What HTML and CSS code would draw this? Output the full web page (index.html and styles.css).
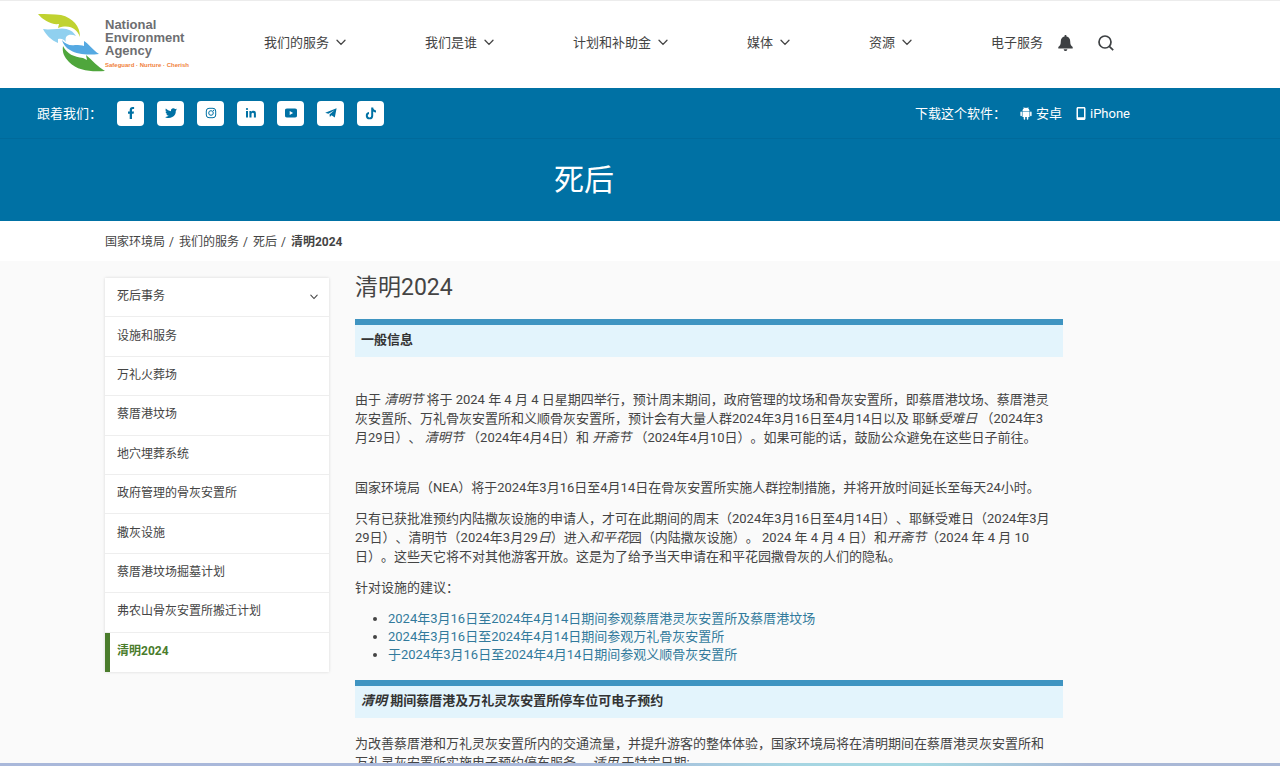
FILE: index.html
```html
<!DOCTYPE html>
<html lang="zh-CN">
<head>
<meta charset="utf-8">
<meta name="viewport" content="width=device-width, initial-scale=1">
<title>清明2024</title>
<link rel="stylesheet" href="styles.css">
</head>
<body>
<svg class="defs" width="0" height="0" aria-hidden="true">
  <symbol id="chevron" viewBox="0 0 10 7"><path d="M1 1.2 5 5.4 9 1.2" fill="none" stroke="currentColor" stroke-width="1.3" stroke-linecap="round"/></symbol>
</svg>

<header class="header">
  <a class="logo" href="#" aria-label="National Environment Agency">
    <svg class="logo-mark" viewBox="0 0 68 58" aria-hidden="true">
      <path d="M0 0C8 0 16 0 23 1c12 3 19 11 19 22-3-8-10-13-22-9l1-4C13 11 5 6 0 0Z" fill="#c0d230"/>
      <path d="M5 15c5 1 9 0 14 0 8-2 16 1 19 7-6-3-12-1-10 6-2-2-4-4-8-3v4C13 26 8 21 5 15Z" fill="#90d0ef"/>
      <path d="M24 26c3 4 8 6 13 5 4 0 7 0 9 1v-5c5 3 9 9 15 13-10 1-21 1-29-4-4-2-7-6-8-10Z" fill="#55a9e2"/>
      <path d="M25 32c4 8 11 11 20 12l4 2-1-5c6 5 12 12 19 16-14 1-27 0-36-9-5-5-7-10-6-16Z" fill="#4fa63c"/>
    </svg>
    <span class="logo-text">
      <span class="logo-name">National<br>Environment<br>Agency</span>
      <span class="logo-tag">Safeguard · Nurture · Cherish</span>
    </span>
  </a>
  <nav class="nav" aria-label="主导航">
    <a href="#">我们的服务 <svg class="chev"><use href="#chevron"/></svg></a>
    <a href="#">我们是谁 <svg class="chev"><use href="#chevron"/></svg></a>
    <a href="#">计划和补助金 <svg class="chev"><use href="#chevron"/></svg></a>
    <a href="#">媒体 <svg class="chev"><use href="#chevron"/></svg></a>
    <a href="#">资源 <svg class="chev"><use href="#chevron"/></svg></a>
    <a href="#">电子服务</a>
  </nav>
  <div class="tools">
    <button type="button" aria-label="通知"><svg width="15" height="16" viewBox="0 0 15 16"><path d="M7.500 0c.7 0 1 .4 1 1v.5c2.400.5 3.700 2.400 3.700 4.800 0 3.300.9 4.600 2.500 5.700v1.500H.3V12c1.600-1.100 2.500-2.400 2.500-5.700 0-2.400 1.300-4.300 3.700-4.800V1c0-.6.300-1 1-1ZM5.700 14.200h3.600c0 1.100-.8 1.800-1.800 1.800s-1.800-.7-1.800-1.800Z" fill="#3d4043"/></svg></button>
    <button type="button" aria-label="搜索"><svg width="16" height="16" viewBox="0 0 16 16"><g fill="none" stroke="#3d4043" stroke-width="1.700"><circle cx="7" cy="7" r="6"/><path d="m11.300 11.300 3.900 3.900"/></g></svg></button>
  </div>
</header>

<section class="banner">
  <div class="social-row">
    <div class="social">
      <span class="social-label">跟着我们：</span>
      <a href="#" aria-label="Facebook"><svg viewBox="0 0 14 14"><path d="M5.700 13V7.700H4V5.600h1.700V4C5.700 2.100 6.800 1 8.600 1c.8 0 1.500.1 1.500.1v1.800h-.9c-.9 0-1.200.5-1.200 1.100v1.600h2l-.4 2.100H8V13Z"/></svg></a>
      <a href="#" aria-label="Twitter"><svg viewBox="0 0 14 14"><path d="M13 3.300c-.4.200-.9.300-1.400.4.500-.3.900-.8 1-1.300-.5.300-1 .5-1.500.6A2.500 2.500 0 0 0 6.900 5.200 7 7 0 0 1 1.800 2.600a2.500 2.500 0 0 0 .8 3.300c-.4 0-.8-.1-1.100-.3 0 1.200.8 2.200 2 2.500-.4.100-.8.100-1.100 0 .3 1 1.200 1.700 2.300 1.700A5 5 0 0 1 1 10.900a7 7 0 0 0 10.800-6.200c.5-.4.900-.9 1.200-1.400Z"/></svg></a>
      <a href="#" aria-label="Instagram"><svg viewBox="0 0 14 14"><g fill="none" stroke="currentColor" stroke-width="1"><rect x="2.300" y="2.300" width="9.400" height="9.400" rx="2.700"/><circle cx="7" cy="7" r="2.300"/></g><circle cx="9.600" cy="4.400" r=".6"/></svg></a>
      <a href="#" aria-label="LinkedIn"><svg viewBox="0 0 14 14"><path d="M2 5h2v6.500H2ZM3 1.900A1.100 1.100 0 1 1 3 4.100 1.100 1.100 0 0 1 3 1.900ZM5.400 5h2v.9c.3-.6 1-1.100 2-1.100 2.100 0 2.500 1.400 2.500 3.200v3.500h-2V8.400c0-.8 0-1.700-1.100-1.700-1 0-1.300.8-1.300 1.600v3.200H5.400Z"/></svg></a>
      <a href="#" aria-label="YouTube"><svg viewBox="0 0 14 14"><path fill-rule="evenodd" d="M3 2.600h8c1.600 0 2 .7 2 2v4.800c0 1.300-.4 2-2 2H3c-1.600 0-2-.7-2-2V4.600c0-1.300.4-2 2-2ZM5.700 5v4L9.100 7Z"/></svg></a>
      <a href="#" aria-label="Telegram"><svg viewBox="0 0 14 14"><path d="M1.200 6.700 12.600 2.200 10.800 11.600 7.500 9.300 5.900 11 5.500 8.400 10.400 4.200 4.400 7.800Z"/></svg></a>
      <a href="#" aria-label="TikTok"><svg viewBox="0 0 14 14"><path d="M7.200 1.600h2c.2 1.700 1.200 2.700 2.800 2.800v2c-1 0-2-.3-2.800-.9v4.200a3.700 3.700 0 1 1-4.200-3.700v2.100a1.700 1.700 0 1 0 2.200 1.600Z"/></svg></a>
    </div>
    <div class="apps">
      <span>下载这个软件：</span>
      <a href="#"><svg width="12" height="13" viewBox="0 0 12 13"><path d="M2.500 4.200C2.500 2.500 3.300 1.500 4 1.200L3.500.3 4 0l.6 1a4 4 0 0 1 2.800 0L8 0l.5.300L8 1.200c.7.3 1.500 1.300 1.500 3ZM2.500 4.700h7v5.200H8.300V12a.7.700 0 0 1-1.500 0V9.900H5.200V12a.7.700 0 0 1-1.500 0V9.900H2.500ZM.4 5.300a.7.700 0 0 1 1.500 0v3.200a.7.700 0 0 1-1.500 0ZM10.100 5.300a.7.700 0 0 1 1.500 0v3.200a.7.700 0 0 1-1.500 0Z"/></svg> 安卓</a>
      <a href="#"><svg width="10" height="13" viewBox="0 0 10 13"><path fill-rule="evenodd" d="M2 0h6c.9 0 1.500.6 1.500 1.500v10c0 .9-.6 1.500-1.500 1.500H2c-.9 0-1.500-.6-1.500-1.500v-10C.5.6 1.100 0 2 0Zm0 1.500v8.700h6V1.500Z"/></svg> iPhone</a>
    </div>
  </div>
  <p class="banner-title">死后</p>
</section>

<nav class="crumbs" aria-label="面包屑">
  <a href="#">国家环境局</a><span>/</span><a href="#">我们的服务</a><span>/</span><a href="#">死后</a><span>/</span><strong>清明2024</strong>
</nav>

<div class="page">
  <nav class="side" aria-label="死后事务">
    <a href="#">死后事务 <svg class="chev-small"><use href="#chevron"/></svg></a>
    <a href="#">设施和服务</a>
    <a href="#">万礼火葬场</a>
    <a href="#">蔡厝港坟场</a>
    <a href="#">地穴埋葬系统</a>
    <a href="#">政府管理的骨灰安置所</a>
    <a href="#">撒灰设施</a>
    <a href="#">蔡厝港坟场掘墓计划</a>
    <a href="#">弗农山骨灰安置所搬迁计划</a>
    <a class="current" href="#" aria-current="page">清明2024</a>
  </nav>
  <main class="content">
    <h1>清明2024</h1>
    <h2>一般信息</h2>
    <p class="lead">由于 <em>清明节</em> 将于 2024 年 4 月 4 日星期四举行，预计周末期间，政府管理的坟场和骨灰安置所，即蔡厝港坟场、蔡厝港灵<br>灰安置所、万礼骨灰安置所和义顺骨灰安置所，预计会有大量人群2024年3月16日至4月14日以及 耶稣<em>受难日</em> （2024年3<br>月29日）、 <em>清明节</em> （2024年4月4日）和 <em>开斋节</em> （2024年4月10日）。如果可能的话，鼓励公众避免在这些日子前往。</p>
    <p>国家环境局（NEA）将于2024年3月16日至4月14日在骨灰安置所实施人群控制措施，并将开放时间延长至每天24小时。</p>
    <p>只有已获批准预约内陆撒灰设施的申请人，才可在此期间的周末（2024年3月16日至4月14日）、耶稣受难日（2024年3月<br>29日）、清明节（2024年3月29<em>日</em>）进入<em>和平花</em>园（内陆撒灰设施）。 2024 年 4 月 4 日）和<em>开斋节</em>（2024 年 4 月 10<br>日）。这些天它将不对其他游客开放。这是为了给予当天申请在和平花园撒骨灰的人们的隐私。</p>
    <p>针对设施的建议：</p>
    <ul>
      <li><a href="#">2024年3月16日至2024年4月14日期间参观蔡厝港灵灰安置所及蔡厝港坟场</a></li>
      <li><a href="#">2024年3月16日至2024年4月14日期间参观万礼骨灰安置所</a></li>
      <li><a href="#">于2024年3月16日至2024年4月14日期间参观义顺骨灰安置所</a></li>
    </ul>
    <h2><em>清明</em> 期间蔡厝港及万礼灵灰安置所停车位可电子预约</h2>
    <p>为改善蔡厝港和万礼灵灰安置所内的交通流量，并提升游客的整体体验，国家环境局将在清明期间在蔡厝港灵灰安置所和<br>万礼灵灰安置所实施电子预约停车服务。 <em>适用</em> 于特定日期:</p>
  </main>
</div>
<div class="edge"></div>
</body>
</html>
```
FILE: styles.css
```css
* { box-sizing: border-box; }
body {
  margin: 0;
  height: 100vh;
  display: flex;
  flex-direction: column;
  overflow: hidden;
  background: #fafafa;
  color: #444;
  font: 13px/19px Roboto, "Noto Sans CJK SC", sans-serif;
  text-spacing-trim: space-all;
}
a { color: inherit; text-decoration: none; }
svg { flex: none; fill: currentColor; }
.defs { position: absolute; }

.header {
  flex: none;
  display: flex;
  align-items: center;
  height: 88px;
  padding: 0 150px 4px 38px;
  border-top: 1px solid #ececec;
  background: #fff;
}
.logo { display: flex; width: 149px; flex: none; }
.logo-mark { width: 68px; height: 58px; margin-right: -1px; }
.logo-text {
  display: flex;
  flex-direction: column;
  gap: 4px;
  padding-top: 4px;
  white-space: nowrap;
  color: #6d6e71;
  font-family: "Liberation Sans", sans-serif;
  font-weight: bold;
}
.logo-name { font-size: 13px; line-height: 13px; }
.logo-tag { font-size: 6px; line-height: 8px; color: #f07f3c; }
.nav { display: flex; gap: 79px; margin-left: 77px; white-space: nowrap; }
.nav a { display: flex; align-items: center; gap: 7px; }
.chev { width: 10px; height: 7px; }
.tools { display: flex; gap: 25px; margin-left: 15px; }
button { display: flex; padding: 0; border: 0; background: none; cursor: pointer; }

.banner { flex: none; background: #0071a4; color: #fff; }
.social-row {
  display: flex;
  justify-content: space-between;
  align-items: center;
  height: 51px;
  padding: 0 150px 0 37px;
  border-bottom: 1px solid #006a9b;
}
.social { display: flex; align-items: center; gap: 13px; }
.social-label { margin-right: 2px; }
.social a {
  display: flex;
  justify-content: center;
  align-items: center;
  width: 27px;
  height: 25px;
  border-radius: 4px;
  background: #fff;
  color: #0071a4;
}
.social a svg { width: 14px; height: 14px; }
.apps { display: flex; align-items: center; gap: 14px; }
.apps a { display: flex; align-items: center; gap: 4px; }
.banner-title {
  margin: 0;
  padding: 21px 217px 21px 105px;
  text-align: center;
  font-size: 30px;
  line-height: 40px;
}

.crumbs {
  flex: none;
  display: flex;
  align-items: center;
  height: 40px;
  padding: 2px 105px 0;
  background: #fff;
  font-size: 12px;
}
.crumbs span { margin: 0 5px 0 4px; }

.page {
  flex: 1;
  min-height: 0;
  display: flex;
  align-items: flex-start;
  gap: 26px;
  padding: 13px 217px 0 105px;
  overflow: hidden;
}
.side {
  flex: none;
  display: grid;
  grid-auto-rows: 1fr;
  width: 224px;
  min-height: 394px;
  margin-top: 4px;
  background: #fff;
  box-shadow: 0 0 3px rgba(0, 0, 0, .14);
  font-size: 12px;
}
.side a {
  display: flex;
  justify-content: space-between;
  align-items: center;
  padding: 0 11px 1px 12px;
  border-bottom: 1px solid #eee;
}
.side a:last-child { border-bottom: 0; }
.side .current {
  padding-left: 7px;
  border-left: 5px solid #4a7c2c;
  color: #4a7c2c;
  font-weight: bold;
}
.chev-small { width: 8px; height: 6px; }

.content { flex: 1; min-width: 0; }
h1 { margin: 0 0 17px; font-size: 23px; line-height: 28px; font-weight: 400; }
h2 {
  margin: 0 0 16px;
  padding: 5px 6px 8px;
  border-top: 6px solid #3f94c1;
  background: #e3f4fc;
  color: #333;
  font-size: 13px;
  line-height: 19px;
  font-weight: bold;
}
p { margin: 0 0 12px; white-space: nowrap; }
.content .lead { margin: 33px 0 31px; }
ul { margin: 13px 0 16px; padding-left: 33px; line-height: 18px; }
li a { color: #327a9c; }

.edge { flex: none; height: 3px; background: linear-gradient(90deg, #a9b8da 0 45%, #a6d5e2 62%, #a6d9e2 72%, #a9b8d6 85%); }
```
